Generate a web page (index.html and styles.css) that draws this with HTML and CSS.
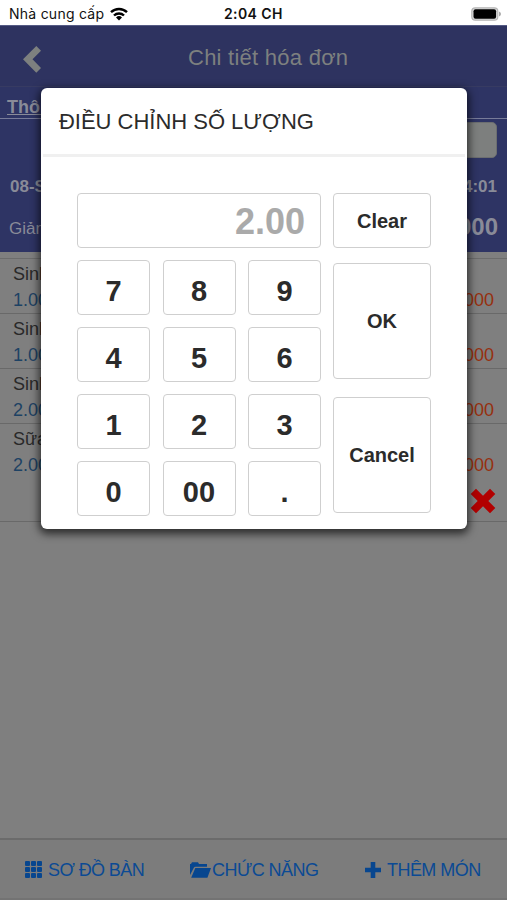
FILE: index.html
```html
<!DOCTYPE html>
<html lang="vi">
<head>
<meta charset="utf-8">
<title>Chi tiết hóa đơn</title>
<link rel="stylesheet" href="styles.css">
</head>
<body>
<div class="status">
  <span class="carrier">Nhà cung cấp</span>
  <svg class="wifi" viewBox="0 0 18 14" width="18" height="14"><g fill="none" stroke="#000" stroke-width="2.4"><path d="M1 5.2a11.6 11.6 0 0 1 16 0"/><path d="M4 8.5a7.2 7.2 0 0 1 10 0"/></g><path d="M9 13.4 6 10.5a4.3 4.3 0 0 1 6 0z"/></svg>
  <b class="clock">2:04 CH</b>
  <svg class="battery" viewBox="0 0 30 14" width="30" height="14"><rect x=".8" y=".8" width="26" height="12.4" rx="3.5" fill="#ddd" stroke="#b5b5b5" stroke-width="1.2"/><rect x="2.5" y="2.2" width="22.6" height="9.6" rx="2" fill="#000"/><path d="M28 4.5q2 .7 2 2.5t-2 2.5z" fill="#aaa"/></svg>
</div>
<header class="header">
  <svg class="back" viewBox="0 0 18 27" width="18" height="27"><path d="M13.3 0 18 4.7 9.5 13.3 18 22l-4.7 4.7L0 13.3z" fill="#7d807f"/></svg>
  <h1 class="title">Chi tiết hóa đơn</h1>
</header>
<section class="summary">
  <div class="tab"><b>Thông</b></div>
  <div class="field-row"><div class="field"></div></div>
  <div class="date"><b>08-Sep</b><b>14:01</b></div>
  <div class="total"><span>Giảm</span><b>.000</b></div>
</section>
<main class="list">
  <div class="item"><p class="name">Sinh</p><p class="figures"><span>1.00</span><span class="price">.000</span></p></div>
  <div class="item"><p class="name">Sinh</p><p class="figures"><span>1.00</span><span class="price">.000</span></p></div>
  <div class="item"><p class="name">Sinh</p><p class="figures"><span>2.00</span><span class="price">.000</span></p></div>
  <div class="item last"><p class="name">Sữa</p><p class="figures"><span>2.00</span><span class="price">.000</span></p>
    <svg class="remove" viewBox="0 0 26 26" width="26" height="26"><path d="M6 .8 13 7.800l7-7L25.300 6l-7 7 7 7-5.300 5.300-7-7-7 7L.7 20l7-7-7-7z" fill="#b20000"/></svg>
  </div>
</main>
<footer class="footer">
  <div class="action tables"><svg viewBox="0 0 17 17" width="17" height="17"><g fill="#07468f"><rect width="5" height="5" rx="1"/><rect x="6" width="5" height="5" rx="1"/><rect x="12" width="5" height="5" rx="1"/><rect y="6" width="5" height="5" rx="1"/><rect x="6" y="6" width="5" height="5" rx="1"/><rect x="12" y="6" width="5" height="5" rx="1"/><rect y="12" width="5" height="5" rx="1"/><rect x="6" y="12" width="5" height="5" rx="1"/><rect x="12" y="12" width="5" height="5" rx="1"/></g></svg><span>SƠ ĐỒ BÀN</span></div>
  <div class="action functions"><svg viewBox="0 0 21 16" width="21" height="16"><path d="M0 13V2h1L2 .3h6L9 2h8v2.700H5.500Q4.300 4.700 3.700 6z M5.300 6H21l-3.600 9.700H1.200z" fill="#07468f"/></svg><span>CHỨC NĂNG</span></div>
  <div class="action add"><svg viewBox="0 0 16 16" width="16" height="16"><path d="M5.700 0h4.600v5.700H16v4.600h-5.700V16H5.700v-5.700H0V5.700h5.700z" fill="#07468f"/></svg><span>THÊM MÓN</span></div>
</footer>
<div class="modal">
  <h2 class="modal-title">ĐIỀU CHỈNH SỐ LƯỢNG</h2>
  <div class="pad">
    <div class="keys">
      <div class="display">2.00</div>
      <div class="key">7</div><div class="key">8</div><div class="key">9</div>
      <div class="key">4</div><div class="key">5</div><div class="key">6</div>
      <div class="key">1</div><div class="key">2</div><div class="key">3</div>
      <div class="key">0</div><div class="key">00</div><div class="key">.</div>
    </div>
    <div class="commands">
      <div class="command">Clear</div>
      <div class="command">OK</div>
      <div class="command">Cancel</div>
    </div>
  </div>
</div>
</body>
</html>
```
FILE: styles.css
```css
* { box-sizing: border-box; }
body { margin: 0; width: 507px; height: 900px; overflow: hidden; position: relative; display: flex; flex-direction: column; background: #7f7f7f; font-family: "Liberation Sans", Arial, sans-serif; }
h1, h2, p { margin: 0; font-weight: 400; }
svg { display: block; flex: none; }
.status { height: 25px; flex: none; background: #fff; display: flex; align-items: center; padding: 2px 6px 0 9px; font-family: Inter, sans-serif; color: #111; }
.carrier { font-size: 14px; width: 96px; letter-spacing: .25px; white-space: nowrap; }
.wifi { margin-left: 5px; }
.clock { margin-left: 96px; font-size: 14px; font-weight: 600; letter-spacing: .4px; white-space: nowrap; }
.battery { margin-left: auto; }
.header { height: 62px; flex: none; background: #2e3360; border-top: 1px solid #555b85; border-bottom: 1px solid #373b62; display: flex; align-items: center; padding: 5px 0 0 23px; }
.back { margin-top: 2px; }
.title { width: 160px; margin: -2px 0 0 147px; font-size: 22px; letter-spacing: .25px; color: #7d807f; white-space: nowrap; }
.summary { height: 165px; flex: none; background: #2e3464; color: #898b98; }
.tab { height: 32px; border-bottom: 1px solid #777b98; padding: 9px 7px 0; font-size: 18px; line-height: 22px; text-decoration: underline; }
.field-row { height: 44px; padding: 3px 10px 0; display: flex; justify-content: flex-end; }
.field { width: 130px; height: 36px; background: #7d7f7e; border: 1px solid #6c6e70; border-radius: 5px; }
.date { height: 41px; padding: 13px 10px 0; display: flex; justify-content: space-between; font-size: 17px; line-height: 22px; }
.total { padding: 10px 9px 0; display: flex; justify-content: space-between; font-size: 17px; line-height: 28px; }
.total b { font-size: 24px; line-height: 26px; }
.total span { padding-top: 1px; }
.list { margin-top: 6px; border-top: 1px solid #6c6c6c; }
.item { height: 55px; border-bottom: 1px solid #696969; padding: 4px 13px 0; font-size: 18px; color: #292929; }
.item.last { height: 98px; }
.name { line-height: 22px; }
.figures { display: flex; justify-content: space-between; margin-top: 4px; line-height: 22px; color: #1d4264; }
.price { color: #96300f; }
.remove { margin: 12px -2px 0 auto; }
.footer { height: 62px; flex: none; margin-top: auto; border-top: 2px solid #6b6b6b; background: #7c7c7c; border-bottom: 2px solid #737373; display: flex; align-items: center; padding: 3px 25px 0; color: #0b4a94; font-size: 18px; }
.action { display: flex; align-items: center; white-space: nowrap; }
.action svg { margin-top: -2px; }
.tables { gap: 6px; width: 165px; letter-spacing: -.6px; }
.functions { gap: 1px; width: 175px; letter-spacing: -.55px; }
.functions svg { width: 21px; }
.add { gap: 6px; letter-spacing: -.55px; }
.modal { position: absolute; left: 41px; top: 88px; width: 426px; height: 441px; background: #fff; border-radius: 6px; box-shadow: 0 3px 8px 2px rgba(0,0,0,.65); color: #2b2b2b; }
.modal-title { height: 69px; border-bottom: 3px solid #f0f0f0; margin: 0 2px; padding: 21px 0 0 16px; font-size: 22px; line-height: 26px; letter-spacing: -.02px; white-space: nowrap; }
.pad { display: flex; gap: 12px; padding: 36px 36px 0; }
.keys { width: 244px; display: grid; grid-template-columns: repeat(3, 73px); grid-template-rows: repeat(5, 55px); gap: 12px 12.5px; }
.display, .key, .command { border: 1px solid #cfcfcf; border-radius: 4px; display: flex; align-items: center; justify-content: center; font-weight: 700; background: #fff; }
.display { grid-column: 1 / 4; justify-content: flex-end; padding: 3px 15px 0 0; font-size: 36px; color: #aaa; }
.key { font-size: 29px; padding-top: 8px; }
.commands { width: 98px; display: grid; grid-template-rows: 55px 116px 116px; row-gap: 18px; margin-top: 0; align-content: start; }
.command { font-size: 20px; padding-top: 1px; }
.command:nth-child(2) { margin: -3px 0 3px; }
.command:nth-child(3) { margin: -3px 0 3px; }
```
